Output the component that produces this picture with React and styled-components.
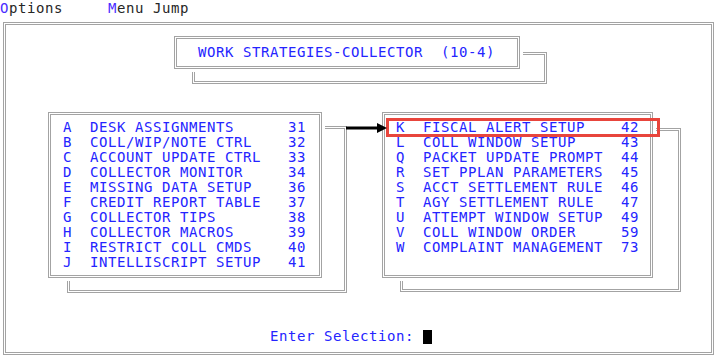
import styled, { createGlobalStyle } from 'styled-components'

const GlobalStyle = createGlobalStyle`
  body {
    margin: 0;
    background: #ffffff;
    font-family: 'DejaVu Sans Mono', 'Liberation Mono', monospace;
  }
`

const LINE = '#a3a3a3'
const BLUE = '#2424ff'

const Screen = styled.div`
  width: 718px;
  height: 361px;
  box-sizing: border-box;
  display: flex;
  flex-direction: column;
  overflow: hidden;
`

const MenuBar = styled.div`
  height: 22px;
  display: flex;
  gap: 45px;
  font-size: 14px;
  line-height: 16px;
  letter-spacing: 0.57px;
  color: #262626;
`

const MenuItem = styled.span`
  white-space: pre;
`

const HotKey = styled.span`
  color: #4a2cff;
`

const Frame = styled.div`
  margin-left: 3px;
  width: 711px;
  height: 333px;
  box-sizing: border-box;
  border: 3px double ${LINE};
  display: flex;
  flex-direction: column;
`

const Shadowed = styled.div`
  position: relative;
  align-self: flex-start;
  &::before {
    content: '';
    position: absolute;
    top: ${(p) => p.$t}px;
    left: ${(p) => p.$l}px;
    right: ${(p) => -p.$r}px;
    bottom: ${(p) => -p.$b}px;
    border: 3px double ${LINE};
    z-index: 0;
  }
`

const TitleArea = styled(Shadowed)`
  margin: 11px 0 0 168px;
`

const Box = styled.div`
  position: relative;
  z-index: 1;
  box-sizing: border-box;
  width: ${(p) => p.$w}px;
  height: ${(p) => p.$h}px;
  border: 3px double ${LINE};
  background: #ffffff;
  box-shadow: 0 0 0 3px #ffffff;
`

const TitleText = styled.div`
  padding-left: 21px;
  font-size: 14px;
  line-height: 27px;
  letter-spacing: 0.57px;
  color: ${BLUE};
  white-space: pre;
`

const Panels = styled.div`
  display: flex;
  gap: 60px;
  margin-top: 43px;
  padding-left: 42px;
`

const MenuList = styled.div`
  padding: 5px 0 0 ${(p) => p.$pad}px;
  display: flex;
  flex-direction: column;
`

const Row = styled.div`
  display: grid;
  grid-template-columns: 27px 198px 18px;
  font-size: 14px;
  line-height: 15px;
  letter-spacing: 0.57px;
  color: ${BLUE};
  white-space: pre;
  ${(p) =>
    p.$selected &&
    `
    border: 3px solid #e8453c;
    margin: -2px -10px;
    padding: 0 7px 1px;
    line-height: 12px;
  `}
`

const Arrow = styled.svg`
  position: absolute;
  left: -36px;
  top: 10px;
  z-index: 2;
`

const Footer = styled.div`
  margin-top: auto;
  padding: 0 0 8px 264px;
  display: flex;
  align-items: center;
  font-size: 14px;
  line-height: 15px;
  letter-spacing: 0.57px;
  color: ${BLUE};
  white-space: pre;
`

const Cursor = styled.span`
  display: inline-block;
  width: 9px;
  height: 14px;
  background: #000000;
`

const left = [
  ['A', 'DESK ASSIGNMENTS', '31'],
  ['B', 'COLL/WIP/NOTE CTRL', '32'],
  ['C', 'ACCOUNT UPDATE CTRL', '33'],
  ['D', 'COLLECTOR MONITOR', '34'],
  ['E', 'MISSING DATA SETUP', '36'],
  ['F', 'CREDIT REPORT TABLE', '37'],
  ['G', 'COLLECTOR TIPS', '38'],
  ['H', 'COLLECTOR MACROS', '39'],
  ['I', 'RESTRICT COLL CMDS', '40'],
  ['J', 'INTELLISCRIPT SETUP', '41'],
]

const right = [
  ['K', 'FISCAL ALERT SETUP', '42'],
  ['L', 'COLL WINDOW SETUP', '43'],
  ['Q', 'PACKET UPDATE PROMPT', '44'],
  ['R', 'SET PPLAN PARAMETERS', '45'],
  ['S', 'ACCT SETTLEMENT RULE', '46'],
  ['T', 'AGY SETTLEMENT RULE', '47'],
  ['U', 'ATTEMPT WINDOW SETUP', '49'],
  ['V', 'COLL WINDOW ORDER', '59'],
  ['W', 'COMPLAINT MANAGEMENT', '73'],
]

const Rows = ({ items, selected }) =>
  items.map(([key, label, num]) => (
    <Row key={key} $selected={key === selected}>
      <span>{key}</span>
      <span>{label}</span>
      <span>{num}</span>
    </Row>
  ))

export default function App() {
  return (
    <Screen>
      <GlobalStyle />
      <MenuBar>
        <MenuItem>
          <HotKey>O</HotKey>ptions
        </MenuItem>
        <MenuItem>
          <HotKey>M</HotKey>enu Jump
        </MenuItem>
      </MenuBar>
      <Frame>
        <TitleArea $t={16} $l={18} $r={27} $b={15}>
          <Box $w={346} $h={33}>
            <TitleText>WORK STRATEGIES-COLLECTOR  (10-4)</TitleText>
          </Box>
        </TitleArea>
        <Panels>
          <Shadowed $t={14} $l={19} $r={25} $b={15}>
            <Box $w={274} $h={166}>
              <MenuList $pad={12}>
                <Rows items={left} />
              </MenuList>
            </Box>
          </Shadowed>
          <Shadowed $t={16} $l={18} $r={28} $b={14}>
            <Arrow width="42" height="12" viewBox="0 0 42 12">
              <rect x="0" y="4.5" width="33" height="3" fill="#000" />
              <polygon points="31,1 41,6 31,11" fill="#000" />
            </Arrow>
            <Box $w={271} $h={166}>
              <MenuList $pad={11}>
                <Rows items={right} selected="K" />
              </MenuList>
            </Box>
          </Shadowed>
        </Panels>
        <Footer>
          Enter Selection: <Cursor />
        </Footer>
      </Frame>
    </Screen>
  )
}
